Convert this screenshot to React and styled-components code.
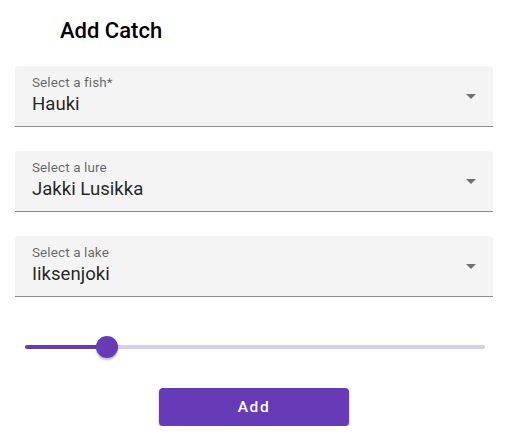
import React, { useState } from 'react';
import styled, { createGlobalStyle } from 'styled-components';

const GlobalStyle = createGlobalStyle`
  body {
    margin: 0;
    background: #fff;
    font-family: Roboto, "Liberation Sans", sans-serif;
  }
`;

const Form = styled.div`
  width: 513px;
  padding: 18px 20px 0 15px;
  box-sizing: border-box;
  display: flex;
  flex-direction: column;
`;

const Title = styled.h2`
  margin: 0 0 22px 45px;
  font-size: 22px;
  font-weight: 500;
  line-height: 26px;
  color: #000;
`;

const Field = styled.div`
  position: relative;
  height: 61px;
  background: #f4f4f4;
  border-radius: 4px 4px 0 0;
  border-bottom: 1px solid #8c8c8c;
  box-sizing: border-box;
  padding: 8px 17px 0;
  margin-bottom: 24px;
  display: flex;
  flex-direction: column;
`;

const Label = styled.span`
  font-size: 13.5px;
  line-height: 16px;
  color: rgba(0, 0, 0, 0.6);
  letter-spacing: 0.1px;
`;

const Value = styled.span`
  margin-top: 1px;
  font-size: 18.6px;
  line-height: 26px;
  color: rgba(0, 0, 0, 0.87);
`;

const Arrow = styled.svg`
  position: absolute;
  right: 10px;
  top: 18px;
  width: 24px;
  height: 24px;
  fill: rgba(0, 0, 0, 0.54);
`;

const SliderRow = styled.div`
  position: relative;
  margin: 14px 8px 0 10px;
  height: 24px;
  display: flex;
  align-items: center;
`;

const Track = styled.div`
  flex: 1;
  height: 4px;
  border-radius: 2px;
  background: #d8ccee;
  position: relative;
`;

const Fill = styled.div`
  height: 100%;
  border-radius: 2px;
  background: #673ab7;
`;

const Thumb = styled.div`
  position: absolute;
  top: 50%;
  width: 22px;
  height: 22px;
  margin: -11px 0 0 -11px;
  border-radius: 50%;
  background: #673ab7;
  box-shadow: 0 2px 2px rgba(0, 0, 0, 0.25);
`;

const Button = styled.button`
  align-self: center;
  margin-top: 29px;
  width: 190px;
  height: 38px;
  border: none;
  border-radius: 4px;
  background: #673ab7;
  color: #fff;
  font-family: Roboto, "Liberation Sans", sans-serif;
  font-size: 15.5px;
  font-weight: 500;
  letter-spacing: 1.6px;
  box-shadow: 0 2px 3px rgba(0, 0, 0, 0.25);
`;

function Select({ label, value }) {
  return (
    <Field>
      <Label>{label}</Label>
      <Value>{value}</Value>
      <Arrow viewBox="0 0 24 24">
        <path d="M7 10l5 5 5-5z" />
      </Arrow>
    </Field>
  );
}

export default function App() {
  const [pct] = useState(17.8);
  return (
    <>
      <GlobalStyle />
      <Form>
        <Title>Add Catch</Title>
        <Select label="Select a fish*" value="Hauki" />
        <Select label="Select a lure" value="Jakki Lusikka" />
        <Select label="Select a lake" value="Iiksenjoki" />
        <SliderRow>
          <Track>
            <Fill style={{ width: `${pct}%` }} />
            <Thumb style={{ left: `${pct}%` }} />
          </Track>
        </SliderRow>
        <Button>Add</Button>
      </Form>
    </>
  );
}
